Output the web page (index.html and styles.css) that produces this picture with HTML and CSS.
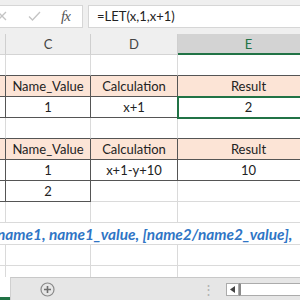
FILE: index.html
```html
<!DOCTYPE html>
<html lang="en">
<head>
    <meta charset="UTF-8">
    <meta name="viewport" content="width=device-width, initial-scale=1.0">
    <title>LET function</title>
    <link rel="stylesheet" href="styles.css">
</head>
<body>

    <div class="app">
        <div class="formula-bar">
            <div class="formula-buttons">
                <svg class="btn-icon" width="10" height="10" viewBox="0 0 10 10"><path d="M1 1L9 9M9 1L1 9" stroke="#c4c4c4" stroke-width="1.3" fill="none"/></svg>
                <svg class="btn-icon check" width="13" height="10" viewBox="0 0 13 10"><path d="M1 5.5L4.5 9L12 1" stroke="#c4c4c4" stroke-width="1.3" fill="none"/></svg>
                <span class="fx">fx</span>
            </div>
            <div class="formula-input">=LET(x,1,x+1)</div>
        </div>

        <div class="sheet-wrap">
            <table class="sheet">
                <colgroup>
                    <col class="col-b">
                    <col class="col-c">
                    <col class="col-d">
                    <col class="col-e">
                </colgroup>
                <tr class="col-head">
                    <th></th><th>C</th><th>D</th><th class="active">E</th>
                </tr>
                <tr>
                    <td class="edge"></td><td class="edge"></td><td class="edge"></td><td class="edge"></td>
                </tr>
                <tr class="head">
                    <td class="box"></td><td class="box">Name_Value</td><td class="box">Calculation</td><td class="box">Result</td>
                </tr>
                <tr>
                    <td class="box"></td><td class="box">1</td><td class="box">x+1</td><td class="box selected">2</td>
                </tr>
                <tr>
                    <td class="edge"></td><td class="edge"></td><td class="edge"></td><td class="edge"></td>
                </tr>
                <tr class="head">
                    <td class="box"></td><td class="box">Name_Value</td><td class="box">Calculation</td><td class="box">Result</td>
                </tr>
                <tr>
                    <td class="box"></td><td class="box">1</td><td class="box">x+1-y+10</td><td class="box">10</td>
                </tr>
                <tr>
                    <td class="box"></td><td class="box">2</td><td></td><td></td>
                </tr>
                <tr>
                    <td></td><td></td><td></td><td></td>
                </tr>
                <tr>
                    <td colspan="4" class="syntax">name1, name1_value, [name2/name2_value],</td>
                </tr>
                <tr>
                    <td></td><td></td><td></td><td></td>
                </tr>
                <tr>
                    <td></td><td></td><td></td><td></td>
                </tr>
            </table>
        </div>

        <div class="tab-bar">
            <div class="sheet-tab"></div>
            <div class="tab-strip">
                <svg class="add-sheet" width="15" height="15" viewBox="0 0 15 15">
                    <circle cx="7.5" cy="7.5" r="6.5" stroke="#8a8a8a" stroke-width="1.2" fill="none"/>
                    <path d="M7.5 4V11M4 7.5H11" stroke="#6e6e6e" stroke-width="1.6"/>
                </svg>
                <span class="grip">⋮</span>
                <div class="scroll-left">
                    <svg width="5" height="7" viewBox="0 0 5 7"><path d="M5 0V7L0 3.5Z" fill="#444"/></svg>
                </div>
                <div class="scroll-track"></div>
            </div>
        </div>
    </div>

</body>
</html>
```

FILE: styles.css
```css
/* Excel-like sheet view */
body {
    margin: 0;
    background: #fff;
    font-family: Lato, "Liberation Sans", sans-serif;
    color: #222;
}
.app {
    width: 300px;
    height: 300px;
    overflow: hidden;
    display: flex;
    flex-direction: column;
}
.formula-bar {
    height: 34px;
    flex: none;
    background: #efefef;
    display: flex;
    align-items: center;
    box-sizing: border-box;
    padding-bottom: 2px;
}
.formula-buttons {
    width: 91px;
    margin-left: -8px;
    height: 23px;
    box-sizing: border-box;
    background: #fff;
    border: 1px solid #d6d6d6;
    display: flex;
    align-items: center;
}
.btn-icon {
    margin-left: 4px;
}
.btn-icon.check {
    margin-left: 21px;
}
.fx {
    margin-left: 20px;
    font-family: "Liberation Serif", serif;
    font-style: italic;
    font-size: 15px;
    color: #555;
    letter-spacing: -1px;
}
.formula-input {
    flex: 1;
    margin-left: 5px;
    height: 23px;
    box-sizing: border-box;
    background: #fff;
    border: 1px solid #d6d6d6;
    border-right: none;
    padding-left: 8px;
    font-size: 13px;
    line-height: 21px;
    color: #222;
}
.sheet-wrap {
    flex: 1;
    overflow: hidden;
}
.sheet {
    table-layout: fixed;
    border-collapse: separate;
    border-spacing: 0;
    width: 320px;
}
.col-b { width: 6px; }
.col-c { width: 85px; }
.col-d { width: 87px; }
.col-e { width: 142px; }
.sheet td, .sheet th {
    height: 20px;
    padding: 0;
    border-right: 1px solid #dadada;
    border-bottom: 1px solid #dadada;
    font-size: 13px;
    text-align: center;
    vertical-align: middle;
    white-space: nowrap;
    overflow: hidden;
}
.col-head th {
    background: #efefef;
    color: #444;
    font-weight: normal;
    border-right-color: #cfcfcf;
    border-bottom-color: #d4d4d4;
}
.col-head th.active {
    background: #d3d3d3;
    color: #217346;
    border-bottom: 2px solid #217346;
    height: 19px;
}
.sheet td.edge {
    border-bottom-color: #555;
}
.sheet td.box {
    border-right-color: #555;
    border-bottom-color: #555;
}
.head td {
    background: #fce4d6;
}
.sheet td.selected {
    outline: 2px solid #217346;
    outline-offset: -1px;
}
.sheet td.syntax {
    text-align: left;
    text-indent: -3px;
    font-size: 15.4px;
    font-weight: bold;
    font-style: italic;
    color: #2f75c5;
    padding-top: 1px;
}
.tab-bar {
    height: 23px;
    flex: none;
    display: flex;
}
.sheet-tab {
    width: 10px;
    background: #fff;
    border-bottom: 3px solid #217346;
    box-sizing: border-box;
}
.tab-strip {
    flex: 1;
    background: #e6e6e6;
    border-top: 1px solid #c8c8c8;
    border-left: 1px solid #d0d0d0;
    display: flex;
    align-items: center;
}
.add-sheet {
    margin-left: 29px;
}
.grip {
    margin-left: 147px;
    color: #b0b0b0;
    font-size: 13px;
    line-height: 1;
}
.scroll-left {
    margin-left: 11px;
    width: 13px;
    height: 13px;
    box-sizing: border-box;
    background: #fff;
    border: 1px solid #ababab;
    display: flex;
    align-items: center;
    justify-content: center;
}
.scroll-track {
    flex: 1;
    height: 13px;
    box-sizing: border-box;
    background: #fff;
    border: 1px solid #ababab;
    border-left: 2px solid #8a8a8a;
    border-right: none;
}
```
